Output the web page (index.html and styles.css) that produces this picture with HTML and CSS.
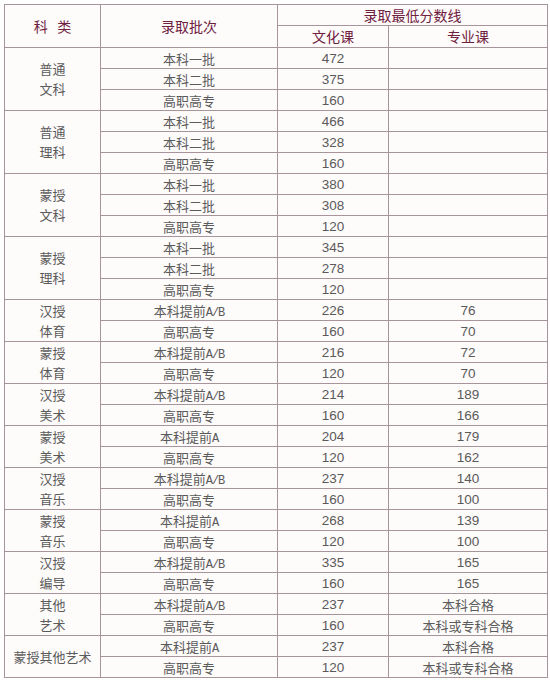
FILE: index.html
```html
<!DOCTYPE html>
<html lang="zh">
<head>
<meta charset="utf-8">
<link rel="stylesheet" href="styles.css">
</head>
<body>
<table class="score">
<colgroup><col class="c1"><col class="c2"><col class="c3"><col class="c4"></colgroup>
<thead>
<tr class="h1"><th rowspan="2">科&nbsp;&nbsp;&nbsp;类</th><th rowspan="2">录取批次</th><th colspan="2">录取最低分数线</th></tr>
<tr class="h2"><th>文化课</th><th>专业课</th></tr>
</thead>
<tbody>
<tr><td rowspan="3" class="cat">普通<br>文科</td><td>本科一批</td><td class="n">472</td><td></td></tr>
<tr><td>本科二批</td><td class="n">375</td><td></td></tr>
<tr><td>高职高专</td><td class="n">160</td><td></td></tr>
<tr><td rowspan="3" class="cat">普通<br>理科</td><td>本科一批</td><td class="n">466</td><td></td></tr>
<tr><td>本科二批</td><td class="n">328</td><td></td></tr>
<tr><td>高职高专</td><td class="n">160</td><td></td></tr>
<tr><td rowspan="3" class="cat">蒙授<br>文科</td><td>本科一批</td><td class="n">380</td><td></td></tr>
<tr><td>本科二批</td><td class="n">308</td><td></td></tr>
<tr><td>高职高专</td><td class="n">120</td><td></td></tr>
<tr><td rowspan="3" class="cat">蒙授<br>理科</td><td>本科一批</td><td class="n">345</td><td></td></tr>
<tr><td>本科二批</td><td class="n">278</td><td></td></tr>
<tr><td>高职高专</td><td class="n">120</td><td></td></tr>
<tr><td rowspan="2" class="cat">汉授<br>体育</td><td>本科提前<span class="lat">A/B</span></td><td class="n">226</td><td class="n">76</td></tr>
<tr><td>高职高专</td><td class="n">160</td><td class="n">70</td></tr>
<tr><td rowspan="2" class="cat">蒙授<br>体育</td><td>本科提前<span class="lat">A/B</span></td><td class="n">216</td><td class="n">72</td></tr>
<tr><td>高职高专</td><td class="n">120</td><td class="n">70</td></tr>
<tr><td rowspan="2" class="cat">汉授<br>美术</td><td>本科提前<span class="lat">A/B</span></td><td class="n">214</td><td class="n">189</td></tr>
<tr><td>高职高专</td><td class="n">160</td><td class="n">166</td></tr>
<tr><td rowspan="2" class="cat">蒙授<br>美术</td><td>本科提前<span class="lat">A</span></td><td class="n">204</td><td class="n">179</td></tr>
<tr><td>高职高专</td><td class="n">120</td><td class="n">162</td></tr>
<tr><td rowspan="2" class="cat">汉授<br>音乐</td><td>本科提前<span class="lat">A/B</span></td><td class="n">237</td><td class="n">140</td></tr>
<tr><td>高职高专</td><td class="n">160</td><td class="n">100</td></tr>
<tr><td rowspan="2" class="cat">蒙授<br>音乐</td><td>本科提前<span class="lat">A</span></td><td class="n">268</td><td class="n">139</td></tr>
<tr><td>高职高专</td><td class="n">120</td><td class="n">100</td></tr>
<tr><td rowspan="2" class="cat">汉授<br>编导</td><td>本科提前<span class="lat">A/B</span></td><td class="n">335</td><td class="n">165</td></tr>
<tr><td>高职高专</td><td class="n">160</td><td class="n">165</td></tr>
<tr><td rowspan="2" class="cat">其他<br>艺术</td><td>本科提前<span class="lat">A/B</span></td><td class="n">237</td><td>本科合格</td></tr>
<tr><td>高职高专</td><td class="n">160</td><td>本科或专科合格</td></tr>
<tr><td rowspan="2" class="cat">蒙授其他艺术</td><td>本科提前<span class="lat">A</span></td><td class="n">237</td><td>本科合格</td></tr>
<tr><td>高职高专</td><td class="n">120</td><td>本科或专科合格</td></tr>
</tbody>
</table>
</body>
</html>
```
FILE: styles.css
```css
html, body {
  margin: 0;
  padding: 0;
  background: #ffffff;
}
body {
  padding: 4px 0 0 4px;
  font-family: "Noto Sans CJK SC", "Liberation Sans", sans-serif;
}
.score {
  border-collapse: collapse;
  table-layout: fixed;
  width: 543px;
  background: #fefbfb;
  color: #5a5a5a;
  font-size: 13px;
}
.c1 { width: 96px; }
.c2 { width: 177px; }
.c3 { width: 111px; }
.c4 { width: 159px; }
.score th, .score td {
  border: 1px solid #a8959b;
  padding: 0;
  text-align: center;
  vertical-align: middle;
  line-height: 19px;
  height: 20px;
  overflow: hidden;
  white-space: nowrap;
}
.score th {
  font-weight: normal;
  color: #6e2040;
  font-size: 14px;
}
.h1 th { height: 20px; }
.h2 th { height: 21px; }
.score td.cat {
  line-height: 20px;
  height: auto;
}
.n {
  font-family: "Liberation Sans", Arial, sans-serif;
  font-size: 13.5px;
}
.lat {
  font-family: "Liberation Mono", monospace;
  font-size: 12px;
  line-height: 10px;
  letter-spacing: -1px;
}
```
